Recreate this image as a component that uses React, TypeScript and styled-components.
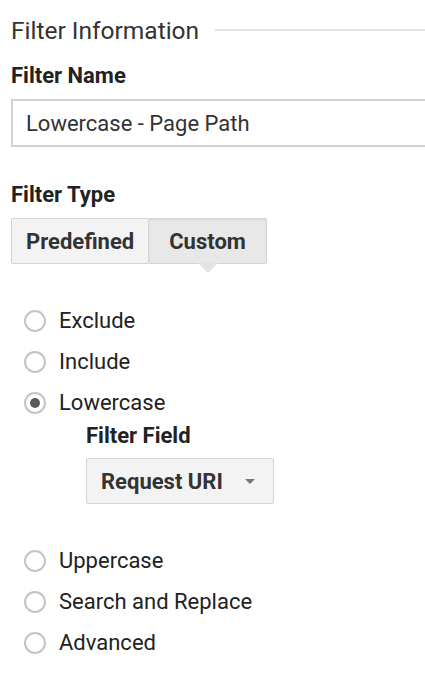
import styled, { createGlobalStyle } from 'styled-components';

const GlobalStyle = createGlobalStyle`
    html, body {
        margin: 0;
        padding: 0;
        background: #fff;
        overflow: hidden;
    }
    body {
        font-family: Roboto, "Liberation Sans", Arial, sans-serif;
        color: #222;
    }
`;

const Page = styled.main`
    width: 425px;
    height: 681px;
    padding: 13px 0 0 11px;
    box-sizing: border-box;
`;

const SectionHeader = styled.div`
    display: flex;
    align-items: center;
    gap: 16px;
    height: 34px;
`;

const SectionTitle = styled.h2`
    margin: 0;
    font-size: 24.5px;
    font-weight: 400;
    color: #333;
    white-space: nowrap;
`;

const Rule = styled.div`
    flex: 1;
    height: 2px;
    background: #e2e2e2;
`;

const Label = styled.div<{ $top: number }>`
    margin-top: ${(p) => p.$top}px;
    font-size: 22px;
    font-weight: 700;
    color: #222;
    line-height: 24px;
`;

const TextInput = styled.div`
    margin-top: 11px;
    height: 48px;
    box-sizing: border-box;
    border: 2px solid #d2d2d2;
    border-right: none;
    padding-left: 13px;
    display: flex;
    align-items: center;
    font-size: 22px;
    color: #333;
`;

const Toggle = styled.div`
    margin-top: 11px;
    display: flex;
`;

const ToggleButton = styled.div<{ $active?: boolean }>`
    position: relative;
    height: 46px;
    box-sizing: border-box;
    padding: 0 ${(p) => (p.$active ? 20 : 14)}px;
    display: flex;
    align-items: center;
    font-size: 22px;
    font-weight: 700;
    color: #333;
    border: 1px solid #d4d4d4;
    border-radius: 2px;
    background: ${(p) => (p.$active ? '#e8e8e8' : '#f3f3f3')};
    box-shadow: ${(p) => (p.$active ? 'inset 0 1px 2px rgba(0,0,0,0.08)' : 'none')};
    & + & {
        margin-left: -1px;
    }
    ${(p) =>
        p.$active &&
        `
        &::after {
            content: '';
            position: absolute;
            left: 50%;
            bottom: -10px;
            margin-left: -10px;
            border-left: 10px solid transparent;
            border-right: 10px solid transparent;
            border-top: 10px solid #e3e3e3;
        }
    `}
`;

const RadioList = styled.div<{ $top: number }>`
    margin-top: ${(p) => p.$top}px;
    padding-left: 13px;
`;

const RadioRow = styled.label`
    display: flex;
    align-items: center;
    gap: 13px;
    height: 41px;
    font-size: 22px;
    color: #222;
`;

const RadioCircle = styled.span<{ $checked?: boolean }>`
    width: 22px;
    height: 22px;
    box-sizing: border-box;
    border: 2px solid #c4c4c4;
    border-radius: 50%;
    display: flex;
    align-items: center;
    justify-content: center;
    &::before {
        content: '';
        width: 10px;
        height: 10px;
        border-radius: 50%;
        background: ${(p) => (p.$checked ? '#5a5a5a' : 'transparent')};
    }
`;

const SubField = styled.div`
    padding-left: 75px;
`;

const Select = styled.div`
    margin-top: 10px;
    width: 188px;
    height: 46px;
    box-sizing: border-box;
    border: 1px solid #d4d4d4;
    border-radius: 2px;
    background: #f3f3f3;
    display: flex;
    align-items: center;
    justify-content: space-between;
    padding: 0 18px 0 14px;
    font-size: 22px;
    font-weight: 700;
    color: #333;
`;

const Caret = styled.span`
    width: 0;
    height: 0;
    border-left: 5px solid transparent;
    border-right: 5px solid transparent;
    border-top: 5px solid #777;
`;

const topOptions = ['Exclude', 'Include', 'Lowercase'];
const bottomOptions = ['Uppercase', 'Search and Replace', 'Advanced'];

const App = () => {
    return (
        <>
            <GlobalStyle />
            <Page>
                <SectionHeader>
                    <SectionTitle>Filter Information</SectionTitle>
                    <Rule />
                </SectionHeader>
                <Label $top={17}>Filter Name</Label>
                <TextInput>Lowercase - Page Path</TextInput>
                <Label $top={36}>Filter Type</Label>
                <Toggle>
                    <ToggleButton>Predefined</ToggleButton>
                    <ToggleButton $active>Custom</ToggleButton>
                </Toggle>
                <RadioList $top={36}>
                    {topOptions.map((o) => (
                        <RadioRow key={o}>
                            <RadioCircle $checked={o === 'Lowercase'} />
                            {o}
                        </RadioRow>
                    ))}
                </RadioList>
                <SubField>
                    <Label $top={1}>Filter Field</Label>
                    <Select>
                        Request URI
                        <Caret />
                    </Select>
                </SubField>
                <RadioList $top={36}>
                    {bottomOptions.map((o) => (
                        <RadioRow key={o}>
                            <RadioCircle />
                            {o}
                        </RadioRow>
                    ))}
                </RadioList>
            </Page>
        </>
    );
};

export default App;
